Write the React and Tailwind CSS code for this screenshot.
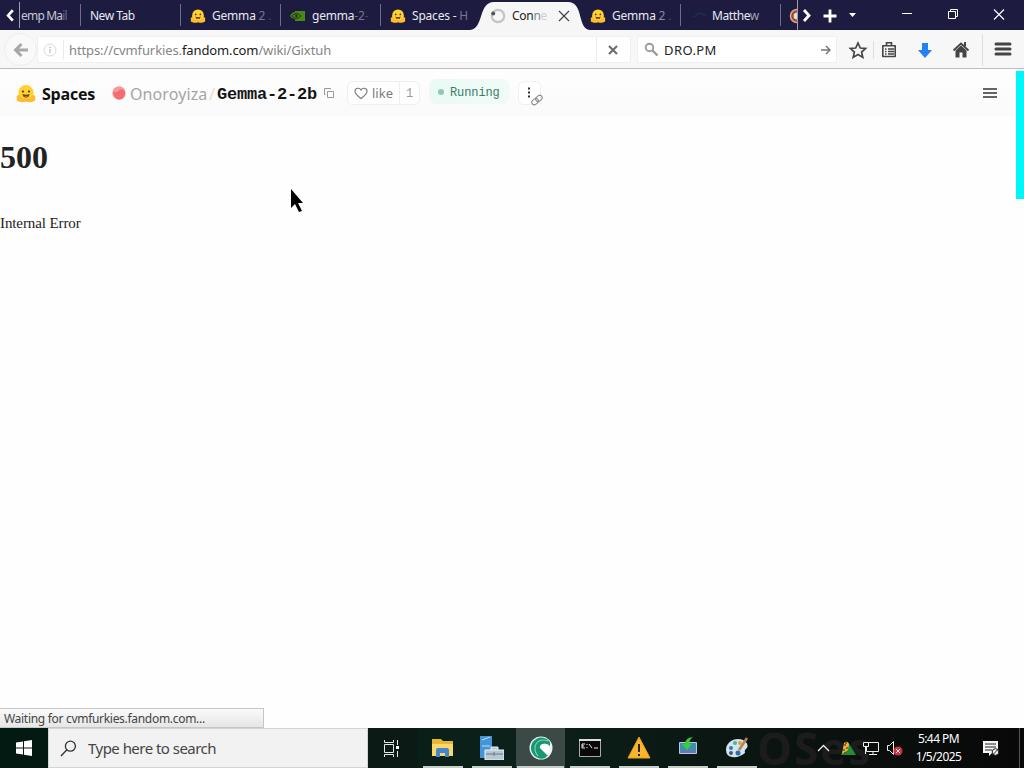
import React from 'react';

const HuggingFace = ({ className }) => (
  <svg viewBox="0 0 20 18" className={className}>
    <path d="M2.500 15V8a7.500 7.500 0 0 1 15 0v7z" fill="#ffd02e" />
    <path d="M3.500 11C1 10 0 12 1 13.500 0 15 1 17 3 17c2 1 5 1 7 0 2 1 5 1 7 0 2 0 3-2 2-3.500 1-1.500 0-3.500-2.500-2.500L14 14H6z" fill="#fdbb30" />
    <circle cx="7" cy="7" r="1.100" fill="#4a3a2a" />
    <circle cx="13" cy="7" r="1.100" fill="#4a3a2a" />
    <path d="M6.500 9.500Q10 11 13.500 9.500Q13 13 10 13Q7 13 6.500 9.500z" fill="#6b432c" />
    <path d="M8.300 12.200Q10 10.800 11.700 12.200Q10 13.400 8.300 12.200z" fill="#e0604e" />
  </svg>
);

const Nvidia = ({ className }) => (
  <svg viewBox="0 0 16 12" className={className}>
    <path d="M5 1h10v10H5V9Q2 9 0 6q2-4 5-4z" fill="#4a8714" />
    <path d="M2 6q4-5 9 0-5 5-9 0z" fill="none" stroke="#1d3a14" strokeWidth="1" />
    <circle cx="6.500" cy="6" r="1.400" fill="#1d3a14" />
  </svg>
);

const tabsBefore = [
  { title: 'Gemma', fade: ' 2', dots: ' .', icon: HuggingFace },
  { title: 'gemma', fade: '-2', dots: '-', icon: Nvidia },
  { title: 'Spaces -', fade: ' H', dots: '', icon: HuggingFace },
];

const Tab = ({ title, fade, dots, icon: Icon }) => (
  <div className="flex h-full w-[100px] shrink-0 items-center">
    <div className="h-[22px] w-px bg-[#6d6d8c]"></div>
    <Icon className="ml-[9px] mt-[2px] h-[14px] w-4" />
    <span className="ml-[6px] mt-[2px] whitespace-pre tracking-[-0.2px] text-[#e8e8f0]">
      {title}
      <span className="text-[#77778f]">{fade}</span>
      <span className="text-[#454564]">{dots}</span>
    </span>
  </div>
);

const TabBar = () => (
  <div className="flex h-[30px] items-center overflow-hidden bg-[#1d1c40] text-[12px] text-white">
    <svg viewBox="0 0 20 30" className="h-[30px] w-[19px] shrink-0">
      <path d="M13.500 10L8.500 15.500l5 5.500" fill="none" stroke="#fff" strokeWidth="2.800" />
    </svg>
    <div className="h-[26px] w-px bg-[#9d9db3]"></div>
    <div className="mt-[2px] w-[60px] shrink-0 whitespace-nowrap pl-px tracking-[-0.8px] text-[#c5c5d2]">
      emp Ma<span className="text-[#66667f]">il</span>
    </div>
    <div className="flex h-full w-[100px] shrink-0 items-center">
      <div className="h-[22px] w-px bg-[#6d6d8c]"></div>
      <span className="ml-[9px] mt-[2px] tracking-[-0.5px] text-[#e8e8f0]">New Tab</span>
    </div>
    {tabsBefore.map((tab) => (
      <Tab key={tab.title} {...tab} />
    ))}
    <div className="relative z-10 -ml-[10px] h-full w-[120px] shrink-0">
      <svg viewBox="0 0 120 30" className="absolute inset-0 h-[30px] w-[120px]">
        <path d="M0 30C14 29 8 2 24 2H98C114 2 107 29 120 30z" fill="#f6f6f6" />
      </svg>
      <div className="relative flex h-full items-center pt-[2px]">
        <svg viewBox="0 0 16 16" className="ml-[20px] h-4 w-4">
          <circle cx="8" cy="8" r="6.200" fill="none" stroke="#c4c4c4" strokeWidth="2.200" />
          <circle cx="3.200" cy="5.500" r="2" fill="#555" />
        </svg>
        <span className="ml-[6px] w-[42px] whitespace-pre tracking-[-0.3px] text-[#222]">
          Con<span className="text-[#888]">n</span><span className="text-[#d0d0d0]">e</span>
        </span>
        <svg viewBox="0 0 12 12" className="ml-[4px] h-3 w-3">
          <path d="M1 1l10 10M11 1L1 11" stroke="#444" strokeWidth="1.200" />
        </svg>
      </div>
    </div>
    <div className="-ml-[10px] flex h-full w-[100px] shrink-0 items-center pt-[2px]">
      <HuggingFace className="ml-[10px] h-[14px] w-4" />
      <span className="ml-[6px] tracking-[-0.2px] text-[#e8e8f0]">
        Gemma <span className="text-[#8a8aa0]">2</span> <span className="text-[#454564]">.</span>
      </span>
    </div>
    <div className="flex h-full w-[100px] shrink-0 items-center">
      <div className="h-[22px] w-px bg-[#6d6d8c]"></div>
      <svg viewBox="0 0 12 6" className="ml-[13px] h-[6px] w-3">
        <path d="M0 5L5 1l7 2" fill="none" stroke="#1b3f55" />
      </svg>
      <span className="ml-[6px] mt-[2px] tracking-[-0.4px] text-[#e8e8f0]">
        Matthe<span className="text-[#a0a0b5]">w</span>
      </span>
    </div>
    <div className="h-[22px] w-px shrink-0 bg-[#6d6d8c]"></div>
    <svg viewBox="0 0 16 30" className="h-[30px] w-4 shrink-0">
      <path d="M16 9.500a6.500 6.500 0 0 0 0 13" fill="#8a4b3a" stroke="#e9a080" strokeWidth="1.600" />
      <path d="M16 12.500a3.500 3.500 0 0 0 0 7" fill="#ddd" />
    </svg>
    <div className="h-[30px] w-px shrink-0 bg-[#9d9db3]"></div>
    <svg viewBox="0 0 226 30" className="h-[30px] w-[226px] shrink-0" fill="none" stroke="#fff">
      <path d="M6 10l5 5.500-5 5.500" strokeWidth="2.800" />
      <path d="M25.500 16h13M32 9.500v13" strokeWidth="2.800" />
      <path d="M51 13h7l-3.500 4z" fill="#fff" stroke="none" />
      <path d="M104 13.500h10" />
      <path d="M150.500 11.500h7v7h-7zM152.500 11.500v-2h7v7h-2" />
      <path d="M196 9.500l10 10M206 9.500l-10 10" strokeWidth="1.100" />
    </svg>
  </div>
);

const NavBar = () => (
  <div className="flex h-[39px] items-center border-b border-[#bdbdbd] bg-[#f7f7f7] pt-px">
    <div className="flex h-[34px] w-[37px] shrink-0 items-center pl-[4px]">
      <div className="flex h-[33px] w-[33px] items-center justify-center rounded-full border border-[#eeeeee] bg-[#f9f9f9]">
        <svg viewBox="0 0 16 16" className="h-4 w-4" fill="none" stroke="#a8a8a8" strokeWidth="3">
          <path d="M15 8H3M8.500 2L2.500 8l6 6" />
        </svg>
      </div>
    </div>
    <div className="flex h-[27px] w-[594px] shrink-0 items-center border border-[#f0f0f0] bg-white">
      <svg viewBox="0 0 14 14" className="ml-[5px] h-[14px] w-[14px]">
        <circle cx="7" cy="7" r="6" fill="none" stroke="#dadada" />
        <path d="M7 6v4M7 3.500v1.500" stroke="#bdbdbd" strokeWidth="1.300" />
      </svg>
      <div className="ml-[6px] h-5 w-px bg-[#ebebeb]"></div>
      <span className="ml-[5px] w-[527px] whitespace-nowrap pt-[2px] text-[13px] tracking-[-0.11px] text-[#858585]">
        https://cvmfurkies.<span className="text-[#1a1a1a]">fandom.com</span>/wiki/Gixtuh
      </span>
      <div className="h-[26px] w-px bg-[#ececec]"></div>
      <svg viewBox="0 0 10 10" className="ml-[11px] h-[10px] w-[10px]">
        <path d="M1 1l8 8M9 1L1 9" stroke="#6b6b6b" strokeWidth="2.100" />
      </svg>
    </div>
    <div className="ml-[6px] flex h-[27px] w-[200px] shrink-0 items-center border border-[#f0f0f0] bg-white">
      <svg viewBox="0 0 15 15" className="ml-[6px] h-[15px] w-[15px]" fill="none" stroke="#999" strokeWidth="1.900">
        <circle cx="5.500" cy="5.500" r="3.800" />
        <path d="M8.500 8.500l5 5" strokeWidth="2.400" />
      </svg>
      <span className="ml-[5px] w-[157px] pt-[2px] text-[13px] tracking-[0.4px] text-[#222]">DRO.PM</span>
      <svg viewBox="0 0 10 10" className="h-[10px] w-[10px]" fill="none" stroke="#777" strokeWidth="1.500">
        <path d="M0 5h8.500M5 1l4 4-4 4" />
      </svg>
    </div>
    <svg viewBox="0 0 187 38" className="h-[38px] w-[187px] shrink-0" fill="none" stroke="#454545">
      <path d="M21 12l2.300 5 5.300.5-4 3.600 1.200 5.300-4.800-2.800-4.800 2.800 1.200-5.300-4-3.600 5.300-.5z" strokeWidth="1.700" />
      <path d="M36.500 10v18M145.500 3v32" stroke="#dfdfdf" />
      <path d="M45.800 14.800h12.400v10.700H45.800z" strokeWidth="1.600" strokeLinejoin="round" />
      <path d="M48 18h1.500M51 18h6M48 20.500h1.500M51 20.500h6M48 23h1.500M51 23h6" strokeWidth="1.300" />
      <path d="M49.500 14.500v-2.700h5v2.700" strokeWidth="1.600" />
      <path d="M85 12h6v7h4l-7 8-7-8h4z" fill="#2482ee" stroke="none" />
      <path d="M116.500 19.500l7.500-7 7.500 7" strokeWidth="1.800" />
      <path d="M118.500 19.500l5.500-5 5.500 5v7h-4v-5h-3v5h-4zM127 11h2v4h-2z" fill="#454545" stroke="none" />
      <path d="M159 13h14M159 18h14M159 23h14" strokeWidth="3" strokeLinecap="round" />
    </svg>
  </div>
);

const SpaceHeader = () => (
  <div className="flex h-[47px] items-center bg-gradient-to-b from-[#fefefe] to-[#fafafa] pt-px">
    <HuggingFace className="ml-[16px] h-[19px] w-[20px]" />
    <span className="ml-[6px] w-[69px] pt-px font-['Open_Sans'] text-[16px] font-bold tracking-[-0.2px] text-[#111]">Spaces</span>
    <svg viewBox="0 0 14 16" className="ml-px h-4 w-[14px]">
      <circle cx="7" cy="8" r="6.700" fill="#f79a96" />
      <path d="M1 6.500Q5 8.500 7 5.500T13 6.500Q13 14.500 7 14.500Q2 13.500 1 6.500z" fill="#f25f68" opacity=".8" />
    </svg>
    <span className="ml-[4px] w-[79px] pt-px text-[16px] tracking-[0.1px] text-[#a5a5a5]">Onoroyiza</span>
    <span className="w-[8px] pt-px text-[16px] text-[#dddddd]">/</span>
    <span className="w-[106px] whitespace-nowrap pt-[3px] font-['Liberation_Mono'] text-[17px] font-bold tracking-[-0.2px] text-[#151515]">Gemma-2-2b</span>
    <svg viewBox="0 0 12 12" className="h-3 w-3" fill="none" stroke="#999">
      <path d="M4.500 4.500h6v6h-6zM2.500 7.500h-1v-6h6v1" />
    </svg>
    <div className="ml-[12px] flex h-[24px] w-[73px] items-center rounded-md border border-[#eeeeee] bg-white">
      <svg viewBox="0 0 14 13" className="ml-[6px] h-[13px] w-[14px]">
        <path d="M7 11.500C3 8.500 1 6.500 1 4.200C1 .8 5.500.3 7 3C8.500.3 13 .8 13 4.200C13 6.500 11 8.500 7 11.500z" fill="none" stroke="#777" strokeWidth="1.100" />
      </svg>
      <span className="ml-[4px] w-[27px] pt-px text-[13px] text-[#7c7c7c]">like</span>
      <div className="h-full w-px bg-[#eeeeee]"></div>
      <span className="ml-[6px] pt-[2px] font-['Liberation_Mono'] text-[12px] text-[#999]">1</span>
    </div>
    <div className="mb-[3px] ml-[9px] flex h-[25px] w-[81px] items-center rounded-lg bg-gradient-to-r from-[#eafaf4] to-[#f1fbf7]">
      <div className="ml-[9px] h-[6px] w-[6px] rounded-full bg-[#8dc9b3]"></div>
      <span className="ml-[6px] pt-[2px] font-['Liberation_Mono'] text-[12px] tracking-[-0.1px] text-[#397d65]">Running</span>
    </div>
    <svg viewBox="0 0 30 30" className="ml-[7px] h-[30px] w-[30px]" fill="none">
      <rect x="1.500" y="3.500" width="22" height="23" rx="5" stroke="#f0f0f0" fill="#fff" />
      <path d="M11 9.500h2v2h-2zM11 13.500h2v2h-2zM11 17.500h2v2h-2z" fill="#333" />
      <g transform="rotate(-40 20 22)" stroke="#888">
        <rect x="14" y="19.500" width="7" height="5" rx="2.500" fill="#fff" />
        <rect x="19" y="19.500" width="7" height="5" rx="2.500" />
      </g>
    </svg>
    <svg viewBox="0 0 14 12" className="ml-auto mr-[19px] h-3 w-[14px]">
      <path d="M0 2h14M0 6h14M0 10h14" stroke="#333" strokeWidth="1.600" />
    </svg>
  </div>
);

const appIcons = [
  {
    name: 'explorer',
    art: (
      <>
        <path d="M1 3h9l2 2h10v15H1z" fill="#e8b637" />
        <path d="M1 8h21v12H1z" fill="#fbd766" />
        <path d="M5 21v-7q0-2 2-2h9q2 0 2 2v7h-4v-4h-5v4z" fill="#4186cf" />
      </>
    ),
  },
  {
    name: 'server',
    art: (
      <>
        <path d="M0 0h12v22H0z" fill="#4395d8" />
        <path d="M2 4l8-3M2 10h8" stroke="#bfe0f6" />
        <path d="M5 14h19v10H5zM11 14v-3h7v3" fill="#b9c7d2" stroke="#edf3f7" />
        <path d="M6 18h17M14 16v4" stroke="#657a8a" />
      </>
    ),
  },
  {
    name: 'browser',
    active: true,
    art: (
      <>
        <circle cx="12" cy="12" r="11.500" fill="#e8f5f1" />
        <path d="M21 6A10.500 10.500 0 1 0 16 22L19 19L12 12Q10 9 14 8Q18 7 21 10z" fill="#189774" />
        <path d="M19 5Q11 2 7 8Q4 14 9 20" stroke="#7fd0b4" strokeWidth="1.200" />
        <path d="M11 10Q14 6 19 9Q21 12 20 17L18 19L12 13Q10 12 11 10z" fill="#fff" />
      </>
    ),
  },
  {
    name: 'terminal',
    art: (
      <>
        <path d="M1.500 3.500h21v17h-21z" fill="#090909" stroke="#aaa" />
        <path d="M1 4h22" stroke="#ddd" strokeWidth="2" />
        <path d="M4 8h3M4 8v4M4 10h2M4 12h3M9 8v1M9 11v1M11 8l3 4M16 12h4" stroke="#eee" />
      </>
    ),
  },
  {
    name: 'warning',
    art: (
      <>
        <path d="M12 1l11 21H1z" fill="#fab52a" stroke="#e6a01f" strokeLinejoin="round" />
        <path d="M12 8v8M12 18v2" stroke="#252525" strokeWidth="2" />
      </>
    ),
  },
  {
    name: 'monitor',
    art: (
      <>
        <path d="M3.500 6.500h17v11h-17z" fill="#408dad" stroke="#b4cad5" />
        <path d="M5 15h14v2H5z" fill="#7b67c7" />
        <path d="M17 1Q9 2 9 8H6l5 6 5-6h-3Q13 4 17 1z" fill="#35cf3b" />
      </>
    ),
  },
  {
    name: 'paint',
    art: (
      <>
        <path d="M1 14C1 6 10 1 18 4Q24 7 22 12Q19 14 20 17Q14 22 7 21Q1 20 1 14z" fill="#d3e4ec" />
        <circle cx="6" cy="12" r="2" fill="#3576b3" />
        <circle cx="10" cy="7" r="2" fill="#4eb58e" />
        <circle cx="15" cy="7" r="2" fill="#e0a342" />
        <circle cx="6" cy="17" r="2" fill="#4a5668" />
        <circle cx="13" cy="17" r="2.500" fill="#2b6daa" />
        <path d="M14 14L22 2" stroke="#b98252" strokeWidth="2.500" />
      </>
    ),
  },
];

const Taskbar = () => (
  <div className="relative flex h-[40px] shrink-0 bg-gradient-to-r from-[#061713] via-[#0b211a] to-[#080808]">
    <div className="absolute left-[757px] top-0 whitespace-nowrap font-['Open_Sans'] text-[44px] font-bold leading-[40px] tracking-[2px] text-[#1c1c1c]">
      OSes
    </div>
    <div className="flex w-[48px] shrink-0 items-center justify-center bg-[#031a12]">
      <svg viewBox="0 0 16 16" className="h-4 w-4" fill="#fff">
        <path d="M0 2.500l7-1v6H0zM8 1.300L16 0v7.500H8zM0 8.500h7v6l-7-1zM8 8.500h8V16l-8-1.200z" />
      </svg>
    </div>
    <div className="flex w-[320px] shrink-0 items-center border border-[#d4d4d4] bg-[#f2f2f2]">
      <svg viewBox="0 0 18 18" className="ml-[11px] h-[17px] w-[17px]" fill="none" stroke="#333" strokeWidth="1.400">
        <circle cx="11" cy="6.500" r="5.300" />
        <path d="M7.300 10.300L1 17" />
      </svg>
      <span className="ml-[11px] text-[15px] tracking-[-0.53px] text-[#444]">Type here to search</span>
    </div>
    <div className="flex w-[50px] shrink-0 items-center justify-center bg-[#0c1a16] pr-[3px]">
      <svg viewBox="0 0 17 17" className="h-[17px] w-[17px]" fill="none" stroke="#e8e8e8">
        <path d="M1.500 4.500h9v8h-9zM1.500 0v2.500h9V0M1.500 17v-2.500h9V17M14.500 0v5M14.500 11v6" />
        <path d="M13 6h3v3h-3z" fill="#fff" stroke="none" />
      </svg>
    </div>
    {appIcons.map(({ name, art, active }) => (
      <div
        key={name}
        className={`relative flex h-full w-[49px] shrink-0 flex-col items-center ${active ? 'bg-[#3b4a47]' : ''}`}
      >
        <svg viewBox="0 0 24 24" className="mt-[8px] h-6 w-6" fill="none">
          {art}
        </svg>
        <div className={`mt-auto h-[2px] bg-[#c6ceca] ${active ? 'w-[47px]' : 'w-[40px]'}`}></div>
      </div>
    ))}
    <div className="relative ml-auto flex items-center text-white">
      <svg viewBox="0 0 92 40" className="h-[40px] w-[92px]" fill="none" stroke="#eee">
        <path d="M5 23l5.500-5.500 5.500 5.500" strokeWidth="1.300" />
        <path d="M35 14l8 13H28z" fill="#238c35" stroke="none" />
        <path d="M29 26l2-11q3-3 5 1l-1 6z" fill="#e0bb3c" stroke="none" />
        <path d="M31 17h2M33 20h2M30 22h2M32 15h2M31 25h2" stroke="#8d3c20" strokeWidth="1.300" />
        <path d="M53.500 14.500h12v9h-12zM56 26.500h8M60 24v2" />
        <path d="M50.500 14.500h5v4h-5zM52.500 19v7" fill="#111" />
        <path d="M74.500 17.500h2l4-4v13l-4-4h-2z" />
        <circle cx="85" cy="23" r="4.500" fill="#cc3342" stroke="none" />
        <path d="M83 21l4 4M87 21l-4 4" />
      </svg>
      <div className="w-[66px] whitespace-nowrap pl-px text-center text-[12px] leading-[18px] tracking-[-0.55px]">
        <div>5:44 PM</div>
        <div>1/5/2025</div>
      </div>
      <svg viewBox="0 0 18 18" className="ml-[11px] h-[18px] w-[18px]">
        <path d="M1 2h15v12h-6l-3 3v-3H1z" fill="#f5f5f5" />
        <path d="M3 5h11M3 8h11M3 11h7" stroke="#222" />
        <circle cx="13.500" cy="13" r="3.300" fill="#eee" stroke="#222" />
        <path d="M11.500 15l4-4" stroke="#222" />
      </svg>
      <div className="ml-[19px] mr-1 h-full w-px bg-[#555]"></div>
    </div>
  </div>
);

const App = () => {
  return (
    <div className="flex h-[768px] w-[1024px] flex-col overflow-hidden bg-white font-['Noto_Sans',sans-serif]">
      <TabBar />
      <NavBar />
      <div className="relative flex flex-1 bg-[#fefefe]">
        <div className="flex w-[1016px] flex-col">
          <SpaceHeader />
          <h1 className="mt-[23px] font-['Liberation_Serif'] text-[32px] font-bold leading-[37px] text-[#222]">500</h1>
          <p className="mt-[38px] font-['Liberation_Serif'] text-[15px] leading-[18px] tracking-[-0.1px] text-[#222]">Internal Error</p>
          <div className="mt-auto flex h-[20px] w-[264px] items-center border border-l-0 border-[#c6c6c6] bg-gradient-to-b from-[#fafafa] to-[#e6e6e6] pl-1 pt-[2px] text-[12px] tracking-[-0.3px] text-[#444]">
            Waiting for cvmfurkies.fandom.com...
          </div>
        </div>
        <div className="mt-[2px] h-[128px] w-2 bg-[#00f7f7]"></div>
        <svg viewBox="0 0 14 24" className="absolute left-[290px] top-[120px] h-6 w-[14px]">
          <path d="M1 0v19l4-4 4 8 3-1-4-8h5z" fill="#000" />
        </svg>
      </div>
      <Taskbar />
    </div>
  );
};

export default App;
